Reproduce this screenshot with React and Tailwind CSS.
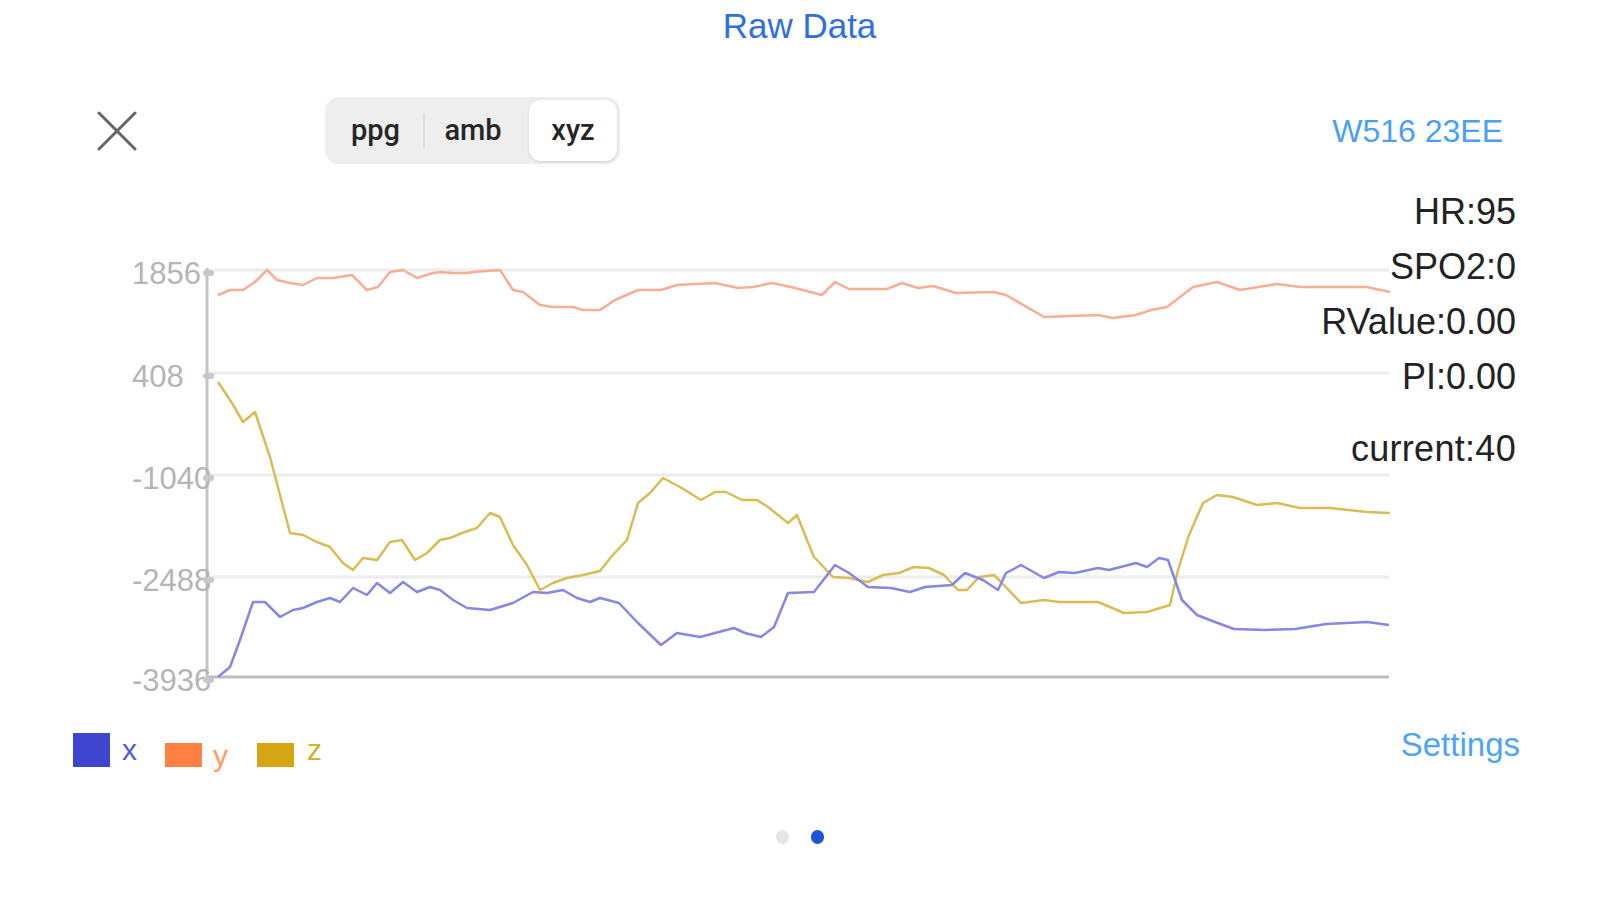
import React from "react";

// chart traces, page coordinates
const ORANGE = [
  [218, 295], [230, 290], [243, 290], [255, 282], [267, 270], [277, 280], [290, 283], [303, 285], [317, 278], [333, 278],
  [352, 275], [367, 290], [378, 287], [390, 272], [403, 270], [417, 278], [433, 273], [440, 272], [453, 273], [467, 273],
  [473, 272], [500, 270], [513, 290], [523, 292], [540, 305], [553, 307], [573, 307], [583, 310], [600, 310], [615, 300],
  [638, 290], [661, 290], [677, 285], [715, 283], [738, 288], [753, 287], [772, 283], [791, 287], [822, 295], [835, 282],
  [849, 289], [887, 289], [902, 283], [918, 288], [933, 286], [956, 293], [994, 292], [1006, 295], [1044, 317], [1098, 315],
  [1113, 318], [1136, 315], [1151, 310], [1167, 307], [1193, 287], [1217, 282], [1240, 290], [1277, 284], [1300, 287],
  [1367, 287], [1390, 292],
];

const GOLD = [
  [218, 382], [232, 403], [243, 422], [255, 412], [270, 457], [290, 533], [303, 535], [317, 542], [330, 547], [343, 563],
  [353, 570], [363, 558], [377, 560], [390, 542], [402, 540], [415, 560], [427, 553], [440, 540], [450, 538], [462, 533],
  [477, 528], [490, 513], [500, 517], [513, 545], [527, 565], [540, 590], [553, 583], [567, 578], [583, 575], [600, 571],
  [611, 557], [627, 540], [638, 503], [650, 493], [663, 478], [680, 487], [701, 500], [715, 492], [726, 492], [742, 500],
  [757, 500], [768, 507], [788, 523], [797, 515], [807, 540], [814, 557], [833, 577], [849, 578], [868, 582], [883, 575],
  [899, 573], [914, 567], [929, 568], [944, 575], [958, 590], [967, 590], [979, 577], [994, 575], [1002, 583], [1021, 603],
  [1044, 600], [1059, 602], [1098, 602], [1124, 613], [1147, 612], [1170, 605], [1178, 570], [1189, 535], [1203, 503],
  [1217, 495], [1233, 497], [1257, 505], [1277, 503], [1300, 508], [1330, 508], [1367, 512], [1390, 513],
];

const BLUE = [
  [218, 677], [230, 667], [240, 640], [253, 602], [265, 602], [280, 617], [293, 610], [303, 608], [317, 602], [330, 598],
  [340, 602], [353, 588], [367, 595], [377, 583], [390, 593], [403, 582], [417, 592], [430, 587], [440, 590], [453, 600],
  [467, 608], [490, 610], [500, 607], [513, 603], [533, 592], [547, 593], [563, 590], [577, 598], [590, 602], [600, 598],
  [619, 603], [638, 623], [661, 645], [677, 633], [700, 637], [715, 633], [734, 628], [745, 633], [761, 637], [774, 627],
  [788, 593], [814, 592], [835, 565], [849, 573], [868, 587], [891, 588], [910, 592], [925, 587], [952, 585], [965, 573],
  [983, 580], [998, 590], [1006, 573], [1021, 565], [1044, 578], [1059, 572], [1075, 573], [1098, 568], [1109, 570],
  [1136, 563], [1147, 567], [1159, 558], [1168, 560], [1182, 600], [1197, 615], [1215, 622], [1234, 629], [1265, 630],
  [1295, 629], [1326, 624], [1367, 622], [1389, 625],
];

const toPts = (arr) => arr.map(([x, y]) => `${x},${y}`).join(" ");

const GRID = [
  { y: 270, label: "1856" },
  { y: 373, label: "408" },
  { y: 475, label: "-1040" },
  { y: 577, label: "-2488" },
  { y: 677, label: "-3936" },
];

const Chart = () => (
  <svg width="1599" height="536" viewBox="0 164 1599 536" className="block">
    {GRID.slice(0, 4).map((g) => (
      <line key={g.y} x1="207" y1={g.y} x2="1389" y2={g.y} stroke="#ececec" strokeWidth="3" />
    ))}
    <line x1="207" y1="677" x2="1389" y2="677" stroke="#bdbdbd" strokeWidth="3" />
    <line x1="207" y1="268" x2="207" y2="679" stroke="#c4c4c4" strokeWidth="3" />
    {GRID.map((g) => (
      <text
        key={g.label}
        x="132"
        y={g.y + 14}
        fill="#b5b5b5"
        fontSize="31"
        fontFamily="'Liberation Sans', Arial, sans-serif"
      >
        {g.label}
      </text>
    ))}
    {GRID.map((g) => (
      <line key={"t" + g.y} x1="206" y1={g.y + 3} x2="211" y2={g.y + 3} stroke="#c8c8c8" strokeWidth="6" strokeLinecap="round" />
    ))}
    <polyline points={toPts(ORANGE)} fill="none" stroke="#f7ae95" strokeWidth="2.5" strokeLinejoin="round" />
    <polyline points={toPts(GOLD)} fill="none" stroke="#d8bd55" strokeWidth="2.5" strokeLinejoin="round" />
    <polyline points={toPts(BLUE)} fill="none" stroke="#8686e4" strokeWidth="2.5" strokeLinejoin="round" />
  </svg>
);

const Segmented = () => (
  <div
    className="flex items-center h-[67px] w-[295px] p-[3px] rounded-[14px] bg-[#eeeeef] text-[29px] font-medium text-[#262626]"
    style={{ fontFamily: "Roboto, 'Liberation Sans', sans-serif" }}
  >
    <div className="w-[95px] text-center">ppg</div>
    <div className="w-[2px] h-[36px] bg-[#dcdcdc]" />
    <div className="w-[96px] text-center">amb</div>
    <div className="w-[8px]" />
    <div className="w-[88px] h-[61px] flex items-center justify-center bg-white rounded-[12px] shadow-[0_1px_3px_rgba(0,0,0,0.12)]">
      xyz
    </div>
  </div>
);

export default function App() {
  return (
    <div
      className="w-[1599px] h-[900px] bg-white flex flex-col overflow-hidden"
      style={{ fontFamily: "'Liberation Sans', Arial, sans-serif" }}
    >
      {/* Title */}
      <div className="h-[52px] flex items-center justify-center text-[35px] text-[#2f70da]">Raw Data</div>

      {/* Header row */}
      <div className="mt-[45px] h-[67px] flex items-center pl-[97px] pr-[96px]">
        <svg width="40" height="40" viewBox="0 0 40 40">
          <path d="M2 2 L38 38 M38 2 L2 38" stroke="#666" strokeWidth="3" strokeLinecap="round" />
        </svg>
        <div className="ml-[188px]">
          <Segmented />
        </div>
        <div className="ml-auto text-[32px] text-[#4aa0f6]">W516 23EE</div>
      </div>

      {/* Chart */}
      <div className="relative h-[536px]">
        <Chart />
        <div className="absolute top-[20px] right-[83px] flex flex-col items-end text-[36px] leading-[55px] text-[#222]">
          <div>HR:95</div>
          <div>SPO2:0</div>
          <div>RValue:0.00</div>
          <div>PI:0.00</div>
          <div className="mt-[17px] tracking-[0.3px]">current:40</div>
        </div>
      </div>

      {/* Legend */}
      <div className="mt-[33px] h-[34px] flex items-end pl-[73px] pr-[79px]">
        <div className="w-[37px] h-[34px] bg-[#3f45cf]" />
        <div className="ml-[12px] text-[30px] leading-[30px] text-[#5a5ad6] mb-[2px]">x</div>
        <div className="ml-[28px] w-[37px] h-[24px] bg-[#ff8040]" />
        <div className="ml-[11px] text-[30px] leading-[30px] text-[#ff9a66] mb-[-4px]">y</div>
        <div className="ml-[29px] w-[37px] h-[24px] bg-[#d5a512]" />
        <div className="ml-[13px] text-[30px] leading-[30px] text-[#d6ae35] mb-[2px]">z</div>
        <div className="ml-auto self-start mt-[-6px] text-[33px] leading-[36px] text-[#4ea4f6]">Settings</div>
      </div>

      {/* Page dots */}
      <div className="mt-[63px] flex justify-center gap-[22px]">
        <div className="w-[13px] h-[14px] rounded-full bg-[#e6e6e6]" />
        <div className="w-[13px] h-[14px] rounded-full bg-[#1a56d6]" />
      </div>
    </div>
  );
}
